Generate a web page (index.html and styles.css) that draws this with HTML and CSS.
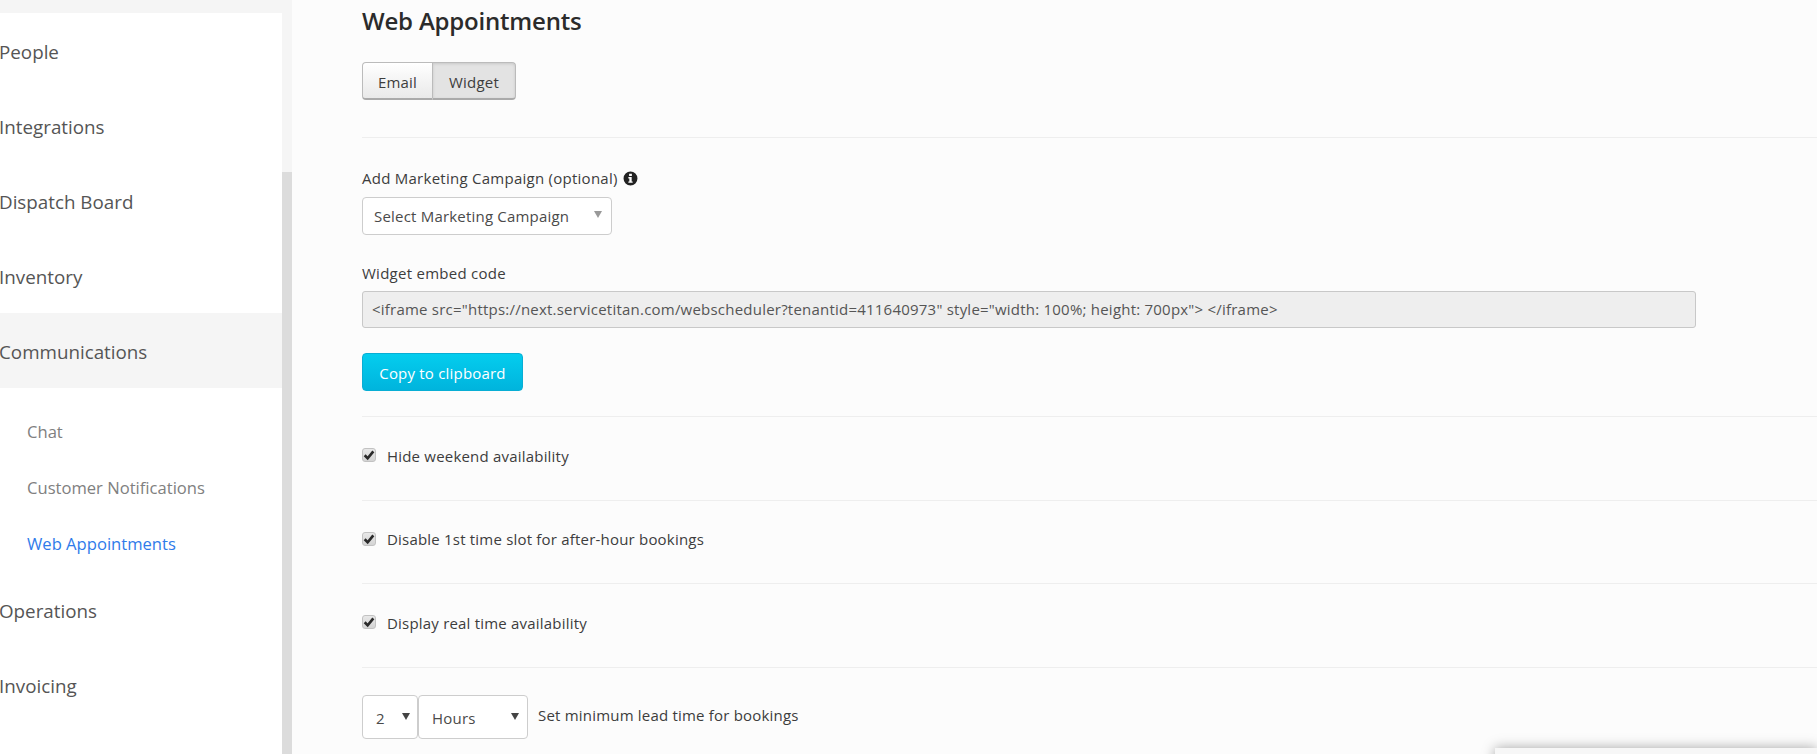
FILE: index.html
```html
<!DOCTYPE html>
<html lang="en">
<head>
<meta charset="utf-8">
<title>Web Appointments</title>
<link rel="stylesheet" href="styles.css">
</head>
<body>
<div class="page">
  <aside class="sidebar">
    <nav class="nav">
      <a class="nav-item">People</a>
      <a class="nav-item">Integrations</a>
      <a class="nav-item">Dispatch Board</a>
      <a class="nav-item">Inventory</a>
      <a class="nav-item open">Communications</a>
      <div class="subnav">
        <a class="sub-item">Chat</a>
        <a class="sub-item">Customer Notifications</a>
        <a class="sub-item active">Web Appointments</a>
      </div>
      <a class="nav-item">Operations</a>
      <a class="nav-item">Invoicing</a>
      <a class="nav-item">Tasks</a>
    </nav>
  </aside>
  <div class="scrollbar"><div class="thumb"></div></div>
  <main class="main">
    <h1 class="title">Web Appointments</h1>
    <div class="btn-group">
      <button class="seg seg-email">Email</button>
      <button class="seg seg-widget">Widget</button>
    </div>
    <div class="section section-form">
      <div class="label label-campaign">Add Marketing Campaign (optional)
        <svg class="info" viewBox="0 0 14 14" aria-hidden="true"><path fill-rule="evenodd" d="M7 .5a6.5 6.5 0 1 1 0 13 6.5 6.5 0 0 1 0-13zM5.7 2.6v2h2.6v-2zM5 5.7v1.2h.9v2.9H5V11h4V9.8h-.9V5.7z"/></svg>
      </div>
      <div class="select select-campaign"><span>Select Marketing Campaign</span><i class="caret caret-light"></i></div>
      <div class="label label-embed">Widget embed code</div>
      <div class="code">&lt;iframe src="https://next.servicetitan.com/webscheduler?tenantid=411640973" style="width: 100%; height: 700px"&gt; &lt;/iframe&gt;</div>
      <button class="copy">Copy to clipboard</button>
    </div>
    <div class="section check-row">
      <span class="check"><svg viewBox="0 0 10 10" aria-hidden="true"><path d="M1.4 5.2 3.9 7.8 8.6 2" /></svg></span>Hide weekend availability
    </div>
    <div class="section check-row check-row-short">
      <span class="check"><svg viewBox="0 0 10 10" aria-hidden="true"><path d="M1.4 5.2 3.9 7.8 8.6 2" /></svg></span>Disable 1st time slot for after-hour bookings
    </div>
    <div class="section check-row">
      <span class="check"><svg viewBox="0 0 10 10" aria-hidden="true"><path d="M1.4 5.2 3.9 7.8 8.6 2" /></svg></span>Display real time availability
    </div>
    <div class="section lead-row">
      <div class="select select-num"><span>2</span><i class="caret"></i></div>
      <div class="select select-unit"><span>Hours</span><i class="caret"></i></div>
      <span class="lead-text">Set minimum lead time for bookings</span>
    </div>
  </main>
</div>
<div class="popup"></div>
</body>
</html>
```
FILE: styles.css
```css
* { box-sizing: border-box; }
html, body { margin: 0; height: 100%; overflow: hidden; }
body {
  font-family: "Open Sans", "Noto Sans", sans-serif;
  font-size: 15px;
  letter-spacing: .2px;
  color: #3d3d3d;
  background: #fcfcfc;
}
.page { display: flex; height: 754px; overflow: hidden; }

.sidebar {
  width: 282px;
  flex: none;
  background: #f5f5f5;
  padding-top: 13px;
  overflow: hidden;
}
.nav { background: #fff; height: 100%; overflow: hidden; }
.nav-item {
  display: flex;
  align-items: center;
  height: 75px;
  padding-top: 2px;
  margin-left: -1px;
  font-size: 18.8px;
  color: #555;
  letter-spacing: 0;
}
.nav-item.open { background: #f5f5f5; }
.subnav { padding: 15px 0 1px; }
.sub-item {
  display: flex;
  align-items: center;
  height: 56px;
  padding-left: 27px;
  font-size: 16.6px;
  color: #808080;
  letter-spacing: 0;
}
.sub-item.active { color: #2f7bea; }

.scrollbar { width: 10px; flex: none; background: #f5f5f5; padding-top: 172px; }
.thumb { height: 100%; background: #dcdcdc; }

.main { flex: 1; min-width: 0; padding-left: 70px; }
.title {
  margin: 0;
  height: 44px;
  font-size: 24px;
  line-height: 42px;
  font-weight: 600;
  color: #2b2b2b;
  letter-spacing: -.2px;
}
.btn-group { display: flex; width: 154px; height: 38px; margin-top: 18px; }
.seg {
  font: inherit;
  letter-spacing: .2px;
  color: #3d3d3d;
  height: 38px;
  padding: 2px 0 0;
  border: 1px solid #bbb;
  border-bottom: 2px solid #aaa;
}
.seg-email {
  width: 71px;
  border-radius: 4px 0 0 4px;
  background: linear-gradient(#fff, #e9e9e9);
}
.seg-widget {
  width: 83px;
  border-left: 0;
  border-radius: 0 4px 4px 0;
  background: #e3e3e3;
  box-shadow: inset 0 1px 3px rgba(0, 0, 0, .12);
}

.section { border-top: 1px solid #eee; }
.section-form { margin-top: 37px; padding-top: 30px; height: 279px; }
.label { line-height: 20px; color: #3d3d3d; letter-spacing: .26px; }
.info { width: 15px; height: 15px; vertical-align: -2px; margin-left: 1px; fill: #222; }
.select {
  display: flex;
  align-items: center;
  justify-content: space-between;
  background: #fff;
  border: 1px solid #cdcdcd;
  border-radius: 4px;
  color: #4a4a4a;
}
.select-campaign { width: 250px; height: 38px; margin-top: 9px; padding: 0 9px 0 11px; }
.caret {
  width: 0;
  height: 0;
  border-left: 4px solid transparent;
  border-right: 4px solid transparent;
  border-top: 7px solid #444;
  margin-top: -3px;
}
.caret-light { border-top-color: #999; }
.label-embed { margin-top: 28px; }
.code {
  margin-top: 8px;
  width: 1334px;
  height: 37px;
  line-height: 35px;
  padding-left: 9px;
  background: #eee;
  border: 1px solid #c8c8c8;
  border-radius: 3px;
  color: #555;
  white-space: nowrap;
  letter-spacing: .22px;
}
.copy {
  display: block;
  margin-top: 25px;
  width: 161px;
  height: 38px;
  padding: 2px 0 0;
  font: inherit;
  letter-spacing: .2px;
  color: #fff;
  background: linear-gradient(#04cdee, #00b4dd);
  border: 1px solid #08aed4;
  border-radius: 4px;
}
.check-row {
  display: flex;
  align-items: center;
  height: 84px;
  padding-bottom: 6px;
}
.check-row-short { height: 83px; }
.check {
  width: 14px;
  height: 14px;
  flex: none;
  margin-right: 11px;
  margin-top: -1px;
  border-radius: 3px;
  border: 1px solid #c2c2c2;
  background: linear-gradient(#e8e8e8, #d4d4d4);
  display: flex;
}
.check svg { width: 12px; height: 12px; fill: none; stroke: #2a2a2a; stroke-width: 2.2; }
.lead-row { display: flex; align-items: flex-start; padding-top: 27px; }
.select-num { width: 56px; height: 44px; padding: 2px 7px 0 13px; }
.select-unit { width: 110px; height: 44px; padding: 2px 8px 0 13px; }
.lead-text { margin-left: 10px; line-height: 40px; }

.popup {
  position: absolute;
  left: 1495px;
  top: 748px;
  width: 322px;
  height: 40px;
  background: #f7f7f7;
  box-shadow: 0 0 12px rgba(0, 0, 0, .35);
}
```
